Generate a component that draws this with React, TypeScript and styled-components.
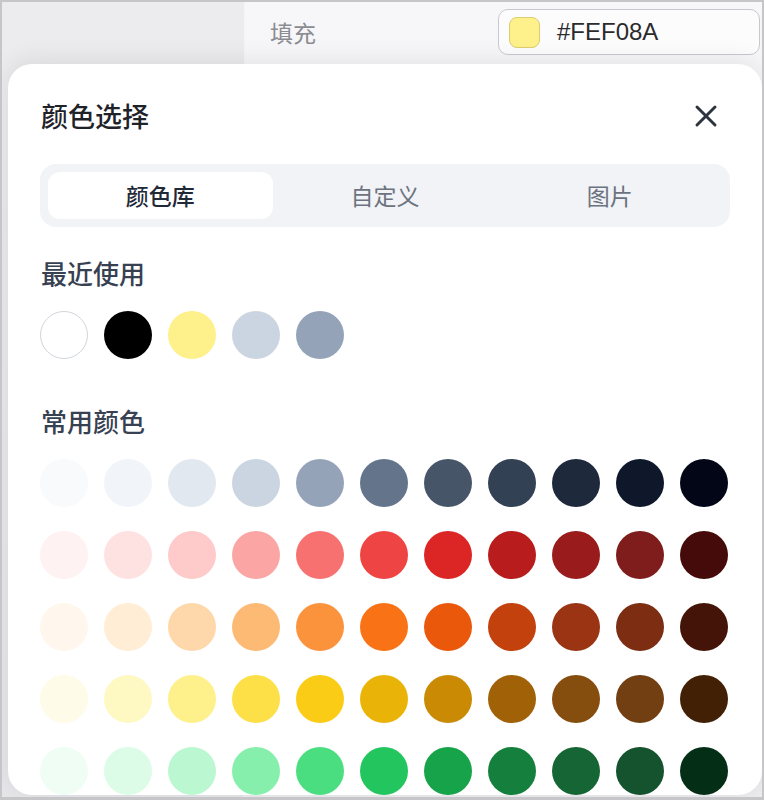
import React, {useState} from 'react';
import styled, {createGlobalStyle} from "styled-components";

const GlobalStyle = createGlobalStyle`
  html, body {
    margin: 0;
    padding: 0;
    background: #ffffff;
  }
  * {
    box-sizing: border-box;
  }
`

const FONT = `"Noto Sans CJK SC", "Noto Sans", sans-serif`;

const Frame = styled.div`
  position: relative;
  width: 764px;
  height: 800px;
  border: 2px solid #c6c6c9;
  border-bottom-width: 3px;
  background: #d9d9dc;
  overflow: hidden;
  font-family: ${FONT};
`

const Backdrop = styled.div`
  display: grid;
  grid-template-columns: 243px 1fr;
  height: 100%;
`

const Sidebar = styled.div`
  background: linear-gradient(180deg, #ececef 0%, #e6e6ea 100%);
  border-right: 1px solid #f4f4f6;
`

const Main = styled.div`
  background: linear-gradient(180deg, #f7f7f9 0%, #ececef 100%);
`

const FillRow = styled.div`
  display: flex;
  align-items: center;
  justify-content: space-between;
  height: 60px;
  padding: 0 2px 0 25px;
`

const FillLabel = styled.span`
  font-size: 23px;
  color: #8b8b92;
  line-height: 1;
`

const ColorInput = styled.div`
  display: flex;
  align-items: center;
  gap: 17px;
  width: 262px;
  height: 46px;
  padding: 0 10px;
  border: 1.5px solid #c9c9cd;
  border-radius: 10px;
  background: #fcfcfd;
`

const InputSwatch = styled.span<{ color: string }>`
  width: 31px;
  height: 31px;
  border-radius: 8px;
  background: ${({color}) => color};
  border: 1px solid #dccd6e;
`

const InputText = styled.span`
  font-family: "Liberation Sans", Arial, sans-serif;
  font-size: 24px;
  color: #2b2b2e;
`

const Sheet = styled.div`
  position: absolute;
  left: 6px;
  right: 0;
  top: 62px;
  bottom: 2px;
  background: #ffffff;
  border-radius: 24px;
  box-shadow: 0 -4px 24px rgba(0, 0, 0, 0.08);
  padding: 32px 32px 0;
  overflow: hidden;
  display: flex;
  flex-direction: column;
`

const SheetHeader = styled.div`
  display: flex;
  align-items: center;
  justify-content: space-between;
  height: 40px;
`

const Title = styled.h2`
  margin: 0;
  font-size: 27px;
  font-weight: 500;
  color: #1f2329;
  line-height: 40px;
  padding-left: 1px;
`

const CloseButton = styled.button`
  display: flex;
  align-items: center;
  justify-content: center;
  width: 48px;
  height: 48px;
  padding: 0;
  border: none;
  background: transparent;
  cursor: pointer;
`

const Tabs = styled.div`
  display: grid;
  grid-template-columns: repeat(3, 1fr);
  margin-top: 28px;
  padding: 8px;
  height: 64px;
  border-radius: 16px;
  background: #f1f3f6;
`

const Tab = styled.button<{ active: boolean }>`
  border: none;
  border-radius: 12px;
  background: ${({active}) => active ? '#ffffff' : 'transparent'};
  font-family: ${FONT};
  font-size: 23px;
  font-weight: ${({active}) => active ? 500 : 400};
  color: ${({active}) => active ? '#1f2937' : '#6b7280'};
  cursor: pointer;
  padding: 0 0 2px;
`

const SectionTitle = styled.h3<{ spacing: number }>`
  margin: ${({spacing}) => spacing}px 0 0;
  font-size: 26px;
  font-weight: 500;
  color: #374151;
  line-height: 36px;
  padding-left: 1px;
`

const RecentRow = styled.div`
  display: flex;
  gap: 16px;
  margin-top: 20px;
`

const Palette = styled.div`
  display: grid;
  grid-template-columns: repeat(11, 48px);
  column-gap: 16px;
  row-gap: 24px;
  margin-top: 20px;
`

const Dot = styled.button<{ color: string, outlined?: boolean }>`
  width: 48px;
  height: 48px;
  padding: 0;
  border-radius: 50%;
  background: ${({color}) => color};
  border: ${({outlined}) => outlined ? '1.5px solid #d1d5db' : 'none'};
  cursor: pointer;
`

const recent = ['#ffffff', '#000000', '#fef08a', '#cbd5e1', '#94a3b8'];

const palette = [
  ['#f8fafc', '#f1f5f9', '#e2e8f0', '#cbd5e1', '#94a3b8', '#64748b', '#475569', '#334155', '#1e293b', '#0f172a', '#020617'],
  ['#fef2f2', '#fee2e2', '#fecaca', '#fca5a5', '#f87171', '#ef4444', '#dc2626', '#b91c1c', '#991b1b', '#7f1d1d', '#450a0a'],
  ['#fff7ed', '#ffedd5', '#fed7aa', '#fdba74', '#fb923c', '#f97316', '#ea580c', '#c2410c', '#9a3412', '#7c2d12', '#431407'],
  ['#fefce8', '#fef9c3', '#fef08a', '#fde047', '#facc15', '#eab308', '#ca8a04', '#a16207', '#854d0e', '#713f12', '#422006'],
  ['#f0fdf4', '#dcfce7', '#bbf7d0', '#86efac', '#4ade80', '#22c55e', '#16a34a', '#15803d', '#166534', '#14532d', '#052e16'],
];

const tabs = ['颜色库', '自定义', '图片'];

const CloseIcon = () => (
  <svg width="24" height="24" viewBox="0 0 24 24" fill="none">
    <path d="M3 3L21 21M21 3L3 21" stroke="#2d3440" strokeWidth="3" strokeLinecap="round"/>
  </svg>
);

const App = () => {
  const [activeTab, setActiveTab] = useState(0);
  const [fill, setFill] = useState('#FEF08A');

  return (
    <>
      <GlobalStyle/>
      <Frame>
        <Backdrop>
          <Sidebar/>
          <Main>
            <FillRow>
              <FillLabel>填充</FillLabel>
              <ColorInput>
                <InputSwatch color={fill}/>
                <InputText>{fill}</InputText>
              </ColorInput>
            </FillRow>
          </Main>
        </Backdrop>

        <Sheet>
          <SheetHeader>
            <Title>颜色选择</Title>
            <CloseButton aria-label="关闭">
              <CloseIcon/>
            </CloseButton>
          </SheetHeader>

          <Tabs>
            {tabs.map((tab, index) => (
              <Tab key={tab} active={activeTab === index} onClick={() => setActiveTab(index)}>
                {tab}
              </Tab>
            ))}
          </Tabs>

          <SectionTitle spacing={28}>最近使用</SectionTitle>
          <RecentRow>
            {recent.map((color) => (
              <Dot key={color} color={color} outlined={color === '#ffffff'}
                   onClick={() => setFill(color.toUpperCase())}/>
            ))}
          </RecentRow>

          <SectionTitle spacing={44}>常用颜色</SectionTitle>
          <Palette>
            {palette.map((row, rowIndex) => row.map((color) => (
              <Dot key={`${rowIndex}-${color}`} color={color} onClick={() => setFill(color.toUpperCase())}/>
            )))}
          </Palette>
        </Sheet>
      </Frame>
    </>
  );
};

export default App;
